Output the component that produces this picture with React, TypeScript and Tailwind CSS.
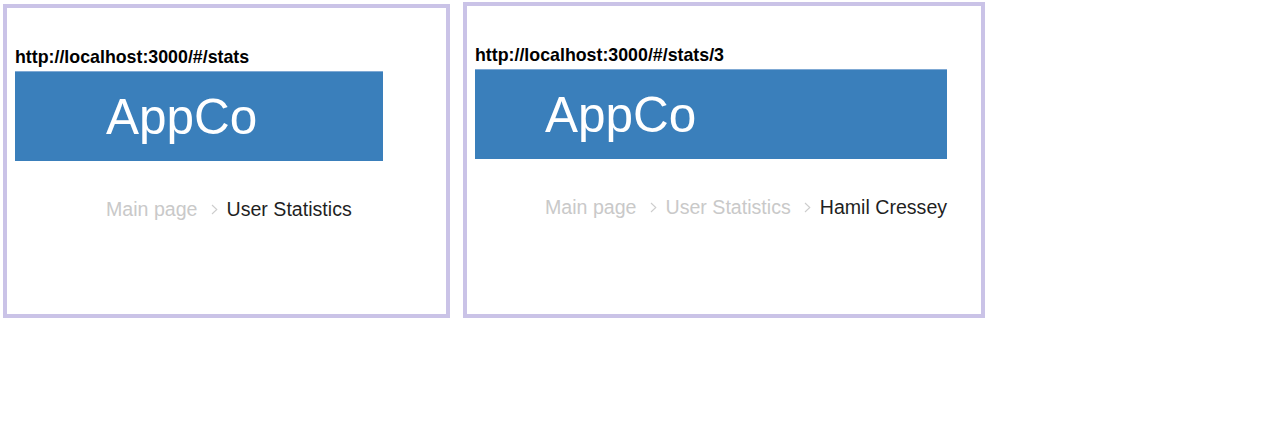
import React from "react";

const Chevron = () => (
  <svg width="7" height="11" viewBox="0 0 7 11" className="ml-[13px] mr-[9px] shrink-0">
    <path d="M1 1 L5.8 5.5 L1 10" fill="none" stroke="#cdcdcd" strokeWidth="1.1" />
  </svg>
);

type Crumb = { label: string; current?: boolean };

const Panel = ({
  url,
  crumbs,
  outerW,
  outerH,
  barW,
  inset,
  className,
}: {
  url: string;
  crumbs: Crumb[];
  outerW: string;
  outerH: string;
  barW: string;
  inset: string;
  className: string;
}) => (
  <div className={`${className} ${outerW} ${outerH} shrink-0 border-4 border-[#cac3e7] bg-white pl-2 pt-[39px]`}>
    <div className="text-[17.8px] leading-[20px] font-bold text-black">{url}</div>
    <div className={`${barW} mt-1 h-[90px] border-t border-[#7fa9d4] bg-[#3a7fbb] flex items-center ${inset}`}>
      <span className="text-[49.5px] leading-[49px] text-white">AppCo</span>
    </div>
    <div className={`mt-[36px] flex items-center ${inset} text-[19.6px] leading-[24px]`}>
      {crumbs.map((c, i) => (
        <React.Fragment key={i}>
          {i > 0 && <Chevron />}
          <span className={c.current ? "text-[#1f1f1f]" : "text-[#c9c9c9]"}>{c.label}</span>
        </React.Fragment>
      ))}
    </div>
  </div>
);

export default function App() {
  return (
    <div
      className="w-[1280px] h-[443px] bg-white flex items-start"
      style={{ fontFamily: '"Liberation Sans", Arial, sans-serif' }}
    >
      <Panel
        className="ml-[3px] mt-[4px]"
        outerW="w-[447px]"
        outerH="h-[314px]"
        barW="w-[368px]"
        inset="pl-[91px]"
        url="http://localhost:3000/#/stats"
        crumbs={[{ label: "Main page" }, { label: "User Statistics", current: true }]}
      />
      <Panel
        className="ml-[13px] mt-[2px]"
        outerW="w-[522px]"
        outerH="h-[316px]"
        barW="w-[472px]"
        inset="pl-[70px]"
        url="http://localhost:3000/#/stats/3"
        crumbs={[
          { label: "Main page" },
          { label: "User Statistics" },
          { label: "Hamil Cressey", current: true },
        ]}
      />
    </div>
  );
}
